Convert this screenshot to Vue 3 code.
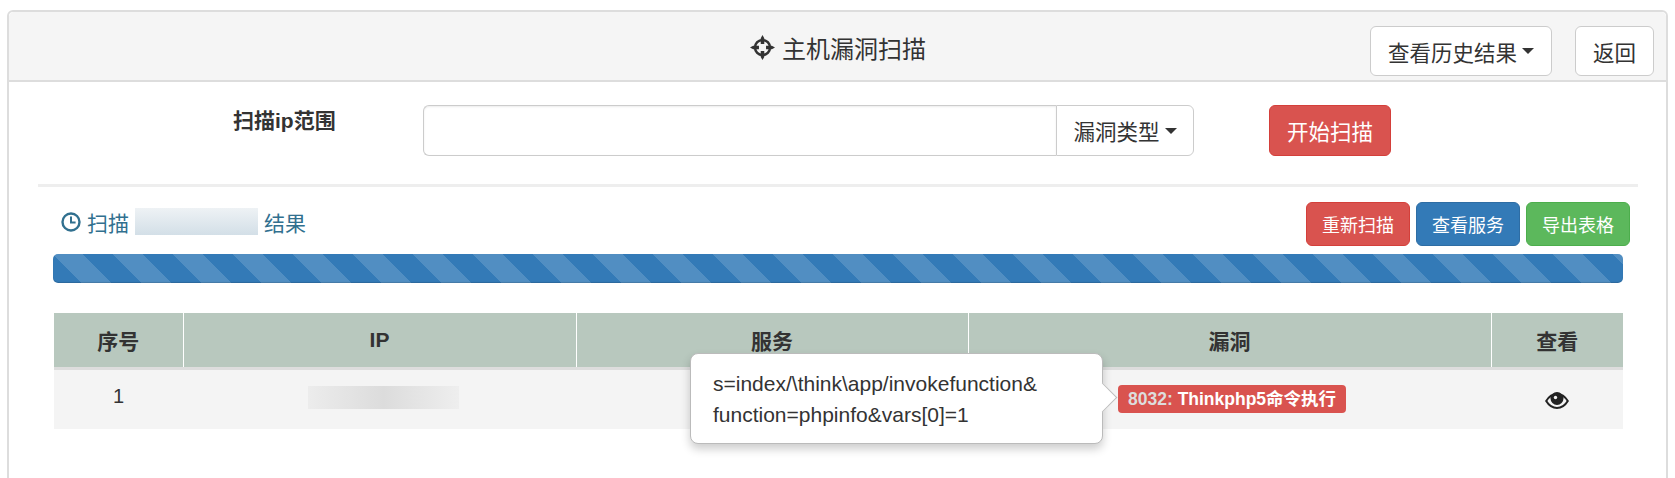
<script setup>
const columns = ['序号', 'IP', '服务', '漏洞', '查看']
</script>

<template>
  <div class="page">
    <section class="panel">
      <header class="panel-head">
        <h3 class="title">
          <svg class="move" viewBox="0 0 24 24" aria-hidden="true">
            <circle cx="12" cy="12" r="7.2" fill="none" stroke="#333" stroke-width="2.4" />
            <path d="M12 0l1.700 3v5.600h-3.400V3zM12 24l-1.700-3v-5.600h3.400V21zM0 12l3-1.700h5.600v3.400H3zM24 12l-3 1.700h-5.600v-3.400H21z" fill="#333" />
          </svg>
          主机漏洞扫描
        </h3>
        <div class="head-actions">
          <button class="btn">查看历史结果<i class="caret"></i></button>
          <button class="btn">返回</button>
        </div>
      </header>

      <div class="form-row">
        <label class="field-label">扫描ip范围</label>
        <div class="input-group">
          <input class="input" type="text" />
          <button class="btn addon">漏洞类型<i class="caret"></i></button>
        </div>
        <button class="btn red start">开始扫描</button>
      </div>

      <hr class="rule" />

      <div class="result-bar">
        <div class="result-title">
          <svg class="clock" viewBox="0 0 20 20" aria-hidden="true">
            <circle cx="10" cy="10" r="8.5" fill="none" stroke="#31708f" stroke-width="2.4" />
            <path d="M10 4.600v6h4.600" fill="none" stroke="#31708f" stroke-width="2" />
          </svg>
          <span>扫描</span>
          <span class="mask-blue"></span>
          <span>结果</span>
        </div>
        <div class="result-actions">
          <button class="btn small red">重新扫描</button>
          <button class="btn small blue">查看服务</button>
          <button class="btn small green">导出表格</button>
        </div>
      </div>

      <div class="progress"></div>

      <div class="table-wrap">
        <table class="table">
          <colgroup>
            <col class="c1" /><col class="c2" /><col class="c3" /><col class="c4" /><col class="c5" />
          </colgroup>
          <thead>
            <tr><th v-for="c in columns" :key="c">{{ c }}</th></tr>
          </thead>
          <tbody>
            <tr>
              <td class="index-cell">1</td>
              <td><span class="mask-grey"></span></td>
              <td></td>
              <td class="vuln-cell">
                <span class="tag"><em>8032:</em> Thinkphp5命令执行</span>
              </td>
              <td>
                <svg class="eye" viewBox="0 0 24 18" aria-hidden="true">
                  <path d="M1.200 10C4 5.400 7.500 3 12 3s8 2.400 10.800 7C20 14.600 16.500 17 12 17S4 14.600 1.200 10z" fill="none" stroke="#222" stroke-width="2" />
                  <circle cx="12" cy="7.500" r="6.500" fill="#222" />
                  <circle cx="10.500" cy="6.500" r="1.700" fill="#f3f3f3" />
                </svg>
              </td>
            </tr>
          </tbody>
        </table>
        <div class="popover">
          <i class="arrow"></i>
          s=index/\think\app/invokefunction&amp;<br />function=phpinfo&amp;vars[0]=1
        </div>
      </div>
    </section>
  </div>
</template>

<style>
html, body { margin: 0; background: #fff; overflow: hidden; }
</style>

<style scoped>
.page {
  height: 478px;
  overflow: hidden;
  box-sizing: border-box;
  padding: 10px 7px 0 7px;
  font-family: "Liberation Sans", "Noto Sans CJK SC", sans-serif;
  color: #333;
}
.panel {
  height: 520px;
  box-sizing: border-box;
  border: 2px solid #ddd;
  border-radius: 6px;
  background: #fff;
}
.panel-head {
  height: 70px;
  box-sizing: border-box;
  background: #f5f5f5;
  border-bottom: 2px solid #ddd;
  border-radius: 5px 5px 0 0;
  position: relative;
  display: flex;
  justify-content: flex-end;
  align-items: center;
  padding: 10px 12px 0 0;
}
.title {
  position: absolute;
  left: 741px;
  top: 0;
  height: 70px;
  margin: 0;
  display: flex;
  align-items: center;
  gap: 7px;
  font-size: 24px;
  font-weight: 400;
  color: #333;
}
.move { width: 25px; height: 25px; }
.head-actions { display: flex; gap: 23px; }
.btn {
  height: 50px;
  box-sizing: border-box;
  padding: 0 17px;
  border: 1px solid #ccc;
  border-radius: 6px;
  background: #fff;
  color: #333;
  font: 400 21.5px "Liberation Sans", "Noto Sans CJK SC", sans-serif;
  display: inline-flex;
  align-items: center;
  justify-content: center;
  white-space: nowrap;
}
.caret {
  width: 0;
  height: 0;
  margin-left: 5px;
  border-top: 6px solid #333;
  border-left: 6px solid transparent;
  border-right: 6px solid transparent;
}
.form-row {
  display: flex;
  align-items: flex-start;
  padding: 23px 0 0 224px;
  height: 51px;
}
.field-label {
  width: 190px;
  font-size: 21px;
  font-weight: 700;
  line-height: 28px;
  padding-top: 2px;
}
.input-group { display: flex; width: 771px; }
.input {
  flex: 1;
  min-width: 0;
  height: 51px;
  box-sizing: border-box;
  border: 1px solid #ccc;
  border-right: 0;
  border-radius: 6px 0 0 6px;
  box-shadow: inset 0 1px 2px rgba(0, 0, 0, .08);
  outline: 0;
}
.addon { width: 138px; height: 51px; padding: 0; border-radius: 0 6px 6px 0; }
.start { margin-left: 75px; width: 122px; height: 51px; padding: 0; }
.red { background: #d9534f; border-color: #d43f3a; color: #fff; }
.blue { background: #337ab7; border-color: #2e6da4; color: #fff; }
.green { background: #5cb85c; border-color: #4cae4c; color: #fff; }
.rule {
  margin: 28px 28px 0 29px;
  border: 0;
  height: 3px;
  background: #eee;
}
.result-bar {
  display: flex;
  justify-content: space-between;
  align-items: center;
  margin: 15px 36px 8px 52px;
  height: 44px;
}
.result-title {
  display: flex;
  align-items: center;
  gap: 6px;
  font-size: 21px;
  color: #31708f;
  margin-bottom: 5px;
}
.clock { width: 20px; height: 20px; }
.mask-blue {
  width: 123px;
  height: 27px;
  background: linear-gradient(#eef2f5, #d3dfe7);
}
.result-actions { display: flex; gap: 6px; }
.small {
  width: 104px;
  height: 44px;
  padding: 0;
  font-size: 18px;
}
.progress {
  height: 29px;
  margin: 0 43px 0 44px;
  border-radius: 5px;
  background-color: #337ab7;
  background-image: linear-gradient(45deg, rgba(255,255,255,.15) 25%, transparent 25%, transparent 50%, rgba(255,255,255,.15) 50%, rgba(255,255,255,.15) 75%, transparent 75%, transparent);
  background-size: 60px 60px;
  box-shadow: inset 0 -1px 1px rgba(0, 0, 0, .15);
}
.table-wrap {
  position: relative;
  margin: 30px 43px 0 45px;
}
.table {
  width: 100%;
  table-layout: fixed;
  border-collapse: collapse;
}
.c1 { width: 129px; }
.c2 { width: 393px; }
.c3 { width: 392px; }
.c4 { width: 523px; }
th {
  height: 54px;
  padding: 0;
  background: #b8c8be;
  border-left: 1px solid #fff;
  border-bottom: 3px solid #ddd;
  font-size: 21px;
  font-weight: 700;
  color: #333;
}
th:first-child { border-left: 0; }
td {
  height: 60px;
  box-sizing: border-box;
  padding: 0;
  background: #f4f4f4;
  text-align: center;
  font-size: 20px;
  color: #333;
  vertical-align: middle;
}
.index-cell { padding-bottom: 6px; }
.mask-grey {
  display: block;
  width: 151px;
  height: 23px;
  margin: -3px 0 0 125px;
  background: linear-gradient(90deg, #ececec, #dcdcdc 50%, #eee);
}
.vuln-cell { text-align: left; padding-left: 150px; }
.tag {
  display: inline-block;
  height: 28px;
  line-height: 28px;
  padding: 0 10px;
  border-radius: 4px;
  background: #d9534f;
  color: #fff;
  font-size: 17.5px;
  font-weight: 700;
  white-space: nowrap;
}
.tag em { font-style: normal; color: #ddd; }
.eye { display: block; width: 24px; height: 18px; margin: 2px auto 0; }
.popover {
  position: absolute;
  left: 636px;
  top: 40px;
  width: 413px;
  height: 91px;
  box-sizing: border-box;
  padding: 14px 22px;
  background: #fff;
  border: 1px solid #bbb;
  border-radius: 8px;
  box-shadow: 0 5px 10px rgba(0, 0, 0, .2);
  font-size: 21px;
  line-height: 31px;
  color: #333;
}
.arrow {
  position: absolute;
  right: -11px;
  top: 33px;
  width: 20px;
  height: 20px;
  background: #fff;
  border-top: 1px solid #bbb;
  border-right: 1px solid #bbb;
  transform: rotate(45deg);
}
</style>
